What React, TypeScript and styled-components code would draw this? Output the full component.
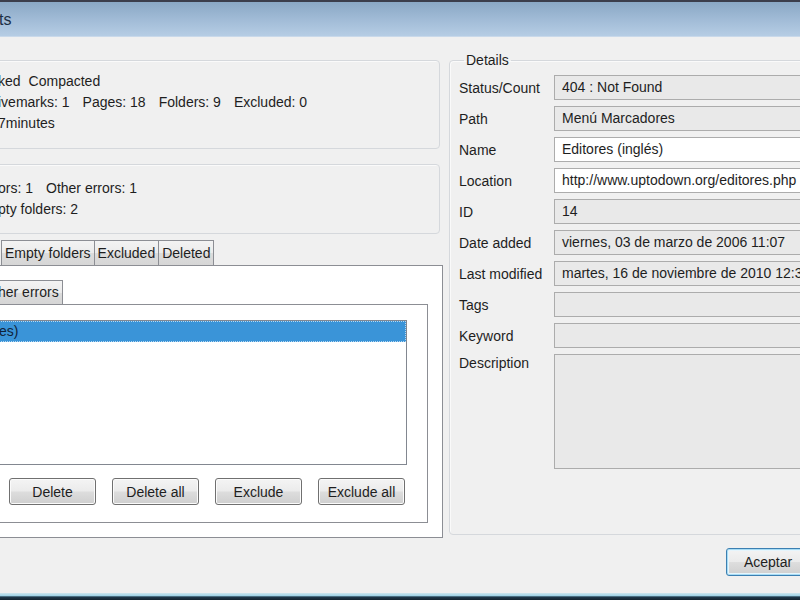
import React from 'react';
import styled, { createGlobalStyle, css } from 'styled-components';

const GlobalStyle = createGlobalStyle`
  html, body {
    margin: 0;
    padding: 0;
    background: #f0f0f0;
  }
  body {
    font-family: "Liberation Sans", Arial, sans-serif;
    font-size: 14px;
    color: #1e1e1e;
  }
`;

const Screen = styled.div`
  width: 800px;
  height: 600px;
  overflow: hidden;
`;

const Window = styled.div`
  width: 870px;
  height: 600px;
  margin-left: -50px;
  display: flex;
  flex-direction: column;
  background: #f0f0f0;
`;

const TitleBar = styled.div`
  height: 35px;
  border-top: 2px solid #3b3e4c;
  background: linear-gradient(to bottom, #8aa8c5 0%, #a3bdd8 55%, #b7cee5 100%);
  display: flex;
  align-items: center;
  padding-left: 49px;
  font-size: 16px;
  color: #1c2f45;
  box-shadow: inset 0 -1px 0 #c9d9ea;
`;

const Body = styled.div`
  display: flex;
  gap: 6px;
  padding-top: 23px;
`;

const LeftColumn = styled.div`
  width: 493px;
  display: flex;
  flex-direction: column;
`;

const GroupBox = styled.div<{ $top?: number; $pad: string }>`
  margin-top: ${(p) => p.$top ?? 0}px;
  margin-right: 3px;
  border: 1px solid #d5d8dc;
  border-radius: 4px;
  box-shadow: inset 1px 1px 0 #fafafa;
  padding: ${(p) => p.$pad};
  display: flex;
  flex-direction: column;
`;

const StatLine = styled.div<{ $gap?: number }>`
  display: flex;
  gap: ${(p) => p.$gap ?? 13}px;
  height: 21px;
  line-height: 21px;
  white-space: nowrap;
`;

const TabStrip = styled.div<{ $lead: number; $top?: number }>`
  display: flex;
  padding-left: ${(p) => p.$lead}px;
  margin-top: ${(p) => p.$top ?? 0}px;
`;

const Tab = styled.div<{ $height: number }>`
  height: ${(p) => p.$height - 1}px;
  line-height: ${(p) => p.$height - 1}px;
  padding: 0 3px;
  border: 1px solid #8c8e94;
  border-bottom: none;
  background: linear-gradient(to bottom, #f3f3f3 0%, #ebebeb 50%, #dcdcdc 51%, #d6d6d6 100%);
  white-space: nowrap;
  & + & {
    border-left: none;
  }
`;

const TabPanel = styled.div<{ $pad: string }>`
  border: 1px solid #8c8e94;
  background: #ffffff;
  padding: ${(p) => p.$pad};
  display: flex;
  flex-direction: column;
`;

const ListBox = styled.div`
  height: 143px;
  border: 1px solid #828790;
  background: #ffffff;
`;

const ListItem = styled.div<{ $selected?: boolean }>`
  height: 21px;
  line-height: 20px;
  padding-left: 22px;
  box-sizing: border-box;
  ${(p) =>
    p.$selected &&
    css`
      background: #3a94d8;
      outline: 1px dotted #b6d8f2;
      outline-offset: -1px;
      color: #10233a;
    `}
`;

const ButtonRow = styled.div`
  display: flex;
  justify-content: flex-end;
  gap: 16px;
  padding-right: 2px;
  margin-top: 13px;
`;

const Button = styled.button<{ $default?: boolean; $width: number }>`
  width: ${(p) => p.$width}px;
  height: 27px;
  font-family: inherit;
  font-size: 14px;
  color: #1e1e1e;
  border: 1px solid #707070;
  border-radius: 3px;
  background: linear-gradient(to bottom, #f4f4f4 0%, #ebebeb 48%, #dddddd 52%, #cfcfcf 100%);
  box-shadow: inset 0 0 0 1px #fbfbfb;
  padding: 0;
  ${(p) =>
    p.$default &&
    css`
      height: 28px;
      border-color: #3c7fb1;
      box-shadow: inset 0 0 0 1px #a7dcf5, inset 0 0 0 2px #e6f5fc;
    `}
`;

const RightColumn = styled.div`
  flex: 1;
  display: flex;
  flex-direction: column;
`;

const Details = styled.fieldset`
  margin: -8px 0 0 0;
  border: 1px solid #d5d8dc;
  border-radius: 4px;
  box-shadow: inset 1px 1px 0 #fafafa;
  padding: 7px 0 66px 9px;
  height: 483px;
  box-sizing: border-box;
  display: flex;
  flex-direction: column;
  gap: 6px;
`;

const Legend = styled.legend`
  padding: 0 2px;
  margin-left: 5px;
  line-height: 16px;
`;

const FieldRow = styled.div<{ $top?: boolean }>`
  display: flex;
  align-items: ${(p) => (p.$top ? 'flex-start' : 'center')};
`;

const FieldLabel = styled.div<{ $top?: boolean }>`
  width: 95px;
  flex-shrink: 0;
  padding-top: ${(p) => (p.$top ? '1px' : '0')};
`;

const Field = styled.div<{ $editable?: boolean; $tall?: boolean }>`
  flex: 1;
  height: ${(p) => (p.$tall ? 115 : 25)}px;
  box-sizing: border-box;
  border: 1px solid #acacac;
  background: ${(p) => (p.$editable ? '#ffffff' : '#e9e9e9')};
  padding-left: 7px;
  line-height: 23px;
  white-space: nowrap;
  overflow: hidden;
`;

const Footer = styled.div`
  display: flex;
  justify-content: flex-end;
  padding: 10px 10px 0 0;
`;

const Spacer = styled.div`
  flex: 1;
`;

const FrameEdge = styled.div`
  height: 7px;
  background: linear-gradient(to bottom, #cfe6ee 0%, #9fd3e6 40%, #1f3a4d 55%, #14232f 100%);
`;

const details: { label: string; value: string; editable?: boolean }[] = [
  { label: 'Status/Count', value: '404 : Not Found' },
  { label: 'Path', value: 'Menú Marcadores' },
  { label: 'Name', value: 'Editores (inglés)', editable: true },
  { label: 'Location', value: 'http://www.uptodown.org/editores.php', editable: true },
  { label: 'ID', value: '14' },
  { label: 'Date added', value: 'viernes, 03 de marzo de 2006 11:07' },
  { label: 'Last modified', value: 'martes, 16 de noviembre de 2010 12:34' },
  { label: 'Tags', value: '' },
  { label: 'Keyword', value: '' },
];

export default function App() {
  return (
    <>
      <GlobalStyle />
      <Screen>
        <Window>
          <TitleBar>ts</TitleBar>
          <Body>
            <LeftColumn>
              <GroupBox $pad="10px 0 14px 47px">
                <StatLine $gap={8}>
                  <span>ked</span>
                  <span>Compacted</span>
                </StatLine>
                <StatLine>
                  <span>ivemarks: 1</span>
                  <span>Pages: 18</span>
                  <span>Folders: 9</span>
                  <span>Excluded: 0</span>
                </StatLine>
                <StatLine>
                  <span>7minutes</span>
                </StatLine>
              </GroupBox>
              <GroupBox $top={15} $pad="13px 0 13px 47px">
                <StatLine>
                  <span>ors: 1</span>
                  <span>Other errors: 1</span>
                </StatLine>
                <StatLine>
                  <span>pty folders: 2</span>
                </StatLine>
              </GroupBox>
              <TabStrip $lead={51} $top={6}>
                <Tab $height={25}>Empty folders</Tab>
                <Tab $height={25}>Excluded</Tab>
                <Tab $height={25}>Deleted</Tab>
              </TabStrip>
              <TabPanel $pad="14px 14px 14px 14px">
                <TabStrip $lead={29}>
                  <Tab $height={24}>her errors</Tab>
                </TabStrip>
                <TabPanel $pad="15px 20px 17px 10px">
                  <ListBox>
                    <ListItem $selected>es)</ListItem>
                  </ListBox>
                  <ButtonRow>
                    <Button $width={87}>Delete</Button>
                    <Button $width={87}>Delete all</Button>
                    <Button $width={87}>Exclude</Button>
                    <Button $width={87}>Exclude all</Button>
                  </ButtonRow>
                </TabPanel>
              </TabPanel>
            </LeftColumn>
            <RightColumn>
              <Details>
                <Legend>Details</Legend>
                {details.map((d) => (
                  <FieldRow key={d.label}>
                    <FieldLabel>{d.label}</FieldLabel>
                    <Field $editable={d.editable}>{d.value}</Field>
                  </FieldRow>
                ))}
                <FieldRow $top>
                  <FieldLabel $top>Description</FieldLabel>
                  <Field $tall />
                </FieldRow>
              </Details>
            </RightColumn>
          </Body>
          <Footer>
            <Button $default $width={84}>
              Aceptar
            </Button>
          </Footer>
          <Spacer />
          <FrameEdge />
        </Window>
      </Screen>
    </>
  );
}
